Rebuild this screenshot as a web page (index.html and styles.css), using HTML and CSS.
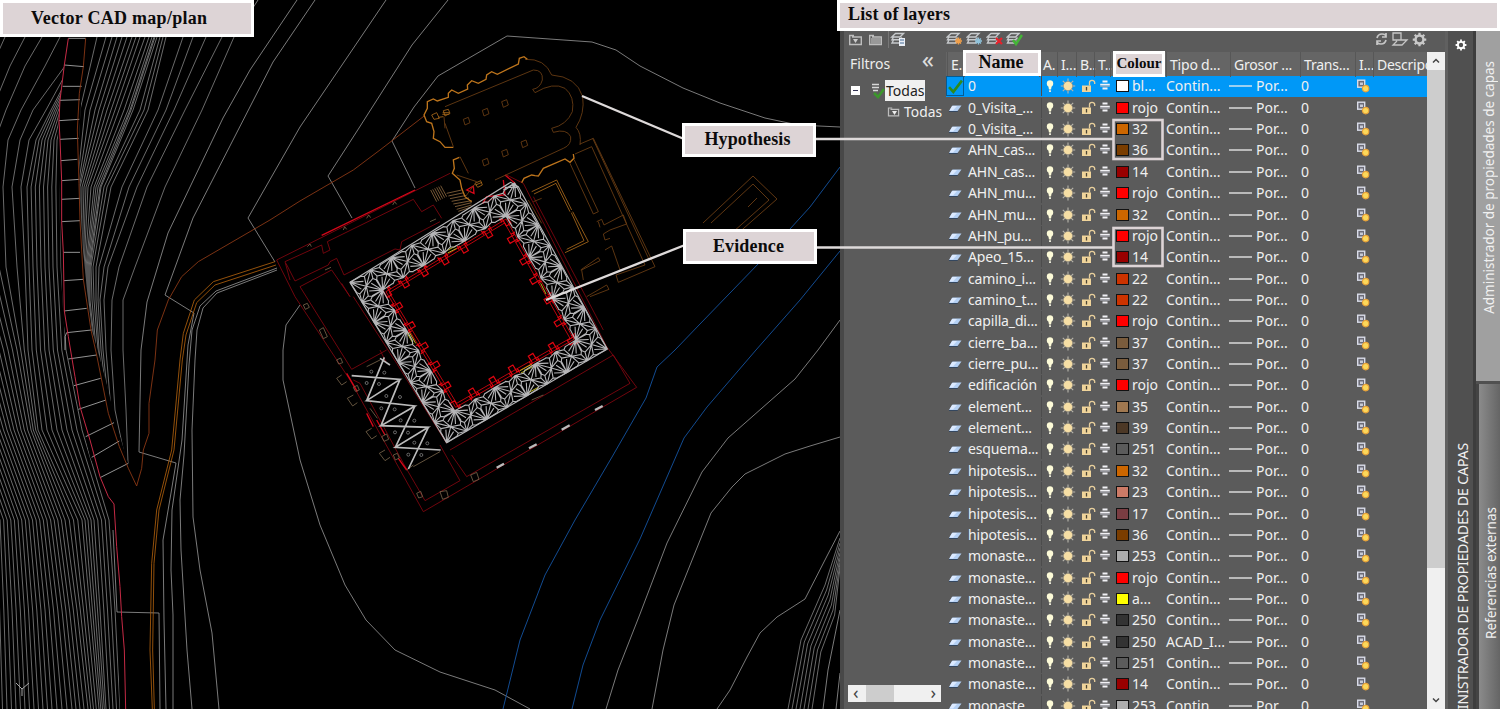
FILE: index.html
```html
<!DOCTYPE html>
<html lang="es">
<head>
<meta charset="utf-8">
<title>Vector CAD map/plan</title>
<link rel="stylesheet" href="styles.css">
</head>
<body>
<svg class="defs" width="0" height="0">
  <symbol id="sheet" viewBox="0 0 14 14"><path d="M4.500 4.500H13.500L9.500 10H1z" fill="#b4d0f4"/><path d="M4 5H9L5 9.500H1.500z" fill="#dceaff"/><path d="M1 10H9.500L10 11H1z" fill="#34475f"/></symbol>
  <symbol id="check" viewBox="0 0 14 14"><path d="M1 8l4 4.500L13 2" fill="none" stroke="#2f8a1c" stroke-width="2.400"/></symbol>
  <symbol id="bulb" viewBox="0 0 10 14"><circle cx="5" cy="4.500" r="3.200" fill="#fdfbd8"/><path d="M3.300 7H6.700L6 10.500H4z" fill="#fdfbd8"/><path d="M4 11.200H6V13H4z" fill="#e8e8d8"/></symbol>
  <symbol id="sun" viewBox="0 0 16 16"><path d="M8 .5V15.500M.8 8H15.200M2.800 2.800L13.200 13.200M13.200 2.800L2.800 13.200" stroke="#b9b6ac" stroke-width="1.100"/><circle cx="8" cy="8" r="4.600" fill="#f7dfa5" stroke="#908a78" stroke-width=".6"/></symbol>
  <symbol id="lock" viewBox="0 0 16 14"><path d="M8.500 6.500V3.500Q8.500 1.300 11 1.300T13.700 3.500V5" fill="none" stroke="#e8cf9c" stroke-width="1.300"/><rect x="1" y="6.500" width="9" height="6.500" fill="#f0d49a"/><path d="M5.500 8V11.500" stroke="#4b4434" stroke-width="1.300"/></symbol>
  <symbol id="plot" viewBox="0 0 12 12"><path d="M3.500 1.500H8.500M1.200 4.700H10.800M3.500 8.500H8.500" stroke="#f2f2f6" stroke-width="1.800"/><path d="M1.200 6.200H10.800" stroke="#aaabb4"/></symbol>
  <symbol id="vp" viewBox="0 0 14 14"><rect x="1.700" y="1.200" width="7" height="7" fill="#6d6d78" stroke="#d9dce8" stroke-width="1.400"/><path d="M4 3.500H7V6H4z" fill="#c7cad6"/><circle cx="9.600" cy="9.600" r="3.200" fill="#fcd85a" stroke="#eaa43a" stroke-width="1.200"/></symbol>
  <symbol id="folder" viewBox="0 0 15 13"><path d="M1 2.500H6M1.700 3V11.500H13.300V4H4" fill="none" stroke="#bdbdbd" stroke-width="1.400"/></symbol>
  <symbol id="stack" viewBox="0 0 15 14"><path d="M5 1.500H13L9.500 5H1.300zM3 5L1.500 7.700H9.500L11.500 5.500M3 8L1.500 11H9.500L12 8" fill="none" stroke="#c6c9cc" stroke-width="1.400"/></symbol>
  <symbol id="gear" viewBox="0 0 16 16"><circle cx="8" cy="8" r="4.200" fill="none" stroke="currentColor" stroke-width="2.600"/><path d="M8 .8V4M8 12V15.200M.8 8H4M12 8H15.200M2.900 2.900L5 5M11 11L13.100 13.100M13.100 2.900L11 5M2.900 13.100L5 11" stroke="currentColor" stroke-width="2.400"/></symbol>
</svg>

<main class="workspace">
  <section class="drawing">
    <svg class="plan" viewBox="0 0 840 709" width="840" height="709">
      <clipPath id="leftOfRoad"><path d="M0 30L68 37 64 66 59 110 58 140 60 220 62 290 63 320 68 350 77 400 90 457 99 478 113 530 117 612 120 709H0z"/></clipPath>
      <clipPath id="rightOfRoad"><path d="M86 37L82 87 79 140 80 200 83 250 87 290 92 330 99 355 107 385 116 423 128 463H300V30H86z"/></clipPath>
      <g id="westContours" clip-path="url(#leftOfRoad)" class="contour"></g>
      <g id="eastContours" clip-path="url(#rightOfRoad)" class="contour"></g>
      <g class="contour bright">
        <path d="M258 0L234 37M297 0L250 70 223 118 168 233 147 302 141 350 139 452 176 463 171 493 163 540 164 620 166 709"/>
        <path d="M315 0L273 62 233 140 193 218 165 295 194 313 188 345 182 440 172 510 171 570 173 615 173 709"/>
        <path d="M386 0L300 127 248 218 275 262M448 0L412 45 359 128 328 176 352 218"/>
        <path d="M415 188L392 141 414 107 438 76 507 36 592 42 616 50 640 66 683 88 720 103 765 118 798 125 840 127"/>
        <path d="M300 305L286 325 283 350 283 380 300 460 320 525 345 585 366 620 395 650 440 672 495 690 530 709"/>
        <path d="M277 268L216 291 200 306 192 330 189 365 184 455 180 500 181 550 187 650 192 709"/>
        <path d="M277 270L217 293 203 308 197 330 195 360 192 430 193 517 200 570 212 633 219 709"/>
        <path d="M117 612L159 613 160 709M113 530L117 612"/>
        <path d="M840 320L818 350 795 379 728 438 702 472 667 543 640 614 618 670 606 709"/>
        <path d="M840 437L810 446 785 454 745 474 732 487 711 513 674 605 663 650 652 709"/>
        <path d="M840 531L827 556 805 599 777 617 760 633 747 657 730 690 717 709"/>
      </g>
      <g id="fanContours" class="contour"></g>
      <path class="contour bright" d="M840 610L828 670 823 709M840 673L836 709"/>
      <g transform="scale(.33333)" class="crossbars">
        <path d="M205 115H257M192 195L252 200M188 259H245M180 301L240 299M177 362L238 358M180 418L236 415M183 482L232 478M185 542L238 538M185 598L240 595M185 665L240 662M190 757H240M192 842L250 838M192 933L260 925M195 1050V1010L200 998 275 990M205 1077L290 1065M222 1157L302 1135M235 1228L318 1200M257 1310L342 1268M275 1372L358 1323M300 1433L385 1390"/>
      </g>
      <g transform="scale(.33333)" class="thin">
        <path class="crimson" d="M205 115L193 195 180 301 177 362 180 418 185 542 185 665 190 757 193 933 205 1010 225 1130 240 1220 270 1320 300 1430 325 1490 342 1512 350 1640 360 1760 365 1850 373 1950 377 2127"/>
        <path class="rust" d="M257 115L250 200 238 280 232 390 237 550 240 662 250 838 273 990 290 1065 325 1240 358 1340 385 1405 410 1458 425 1405 430 1350 447 1300 447 1210 465 1080 472 990 505 900 545 830 595 785 810 660 900 603 1060 510 1140 450 1275 346"/>
        <path class="orange" d="M825 785L640 845 583 900 550 1000 540 1080 515 1350 470 1530 455 1690 450 1950 457 2127M828 795L645 855 590 908 558 1005 547 1080 522 1350 477 1530 462 1690 458 1950 463 2127"/>
      </g>
      <path class="blue" d="M840 167L810 207 760 262 700 324 675 350 657 367 646 398 612 457 575 520 545 575 520 640 503 709M840 251L800 300 756 350 707 407 684 438 640 539 600 620 583 665 572 709"/>

      <!-- monastery walls -->
      <g transform="translate(270 150) scale(.33333)" class="walls">
        <path d="M20 330L540 70M45 335L60 390M20 330L75 440 240 690 460 1085 1100 712 1010 590M45 335L155 285 160 310 180 300 172 275 430 148 455 185 490 165 515 205M48 340L75 393 175 345 180 335 200 325 222 375M90 410L185 360 240 440M90 410L245 658 350 600M222 375L375 297 390 300 395 275 510 215M250 440L380 640 530 880M215 400L240 440M250 690L270 700 330 810 400 940 465 1052 570 992 510 885M545 915L590 980 1080 700 1030 615 540 900M640 160L700 130M710 75L760 100 1010 590M790 140L1000 540M330 600L350 640"/>
        <path class="vivid" d="M155 256L435 120M230 670L262 725M320 810L345 855M385 925L410 960M310 830L290 790M700 90L705 135 650 140 638 160M705 75L735 100M590 120L610 108 612 130z"/>
        <path class="stone" d="M215 675L200 685 215 705 230 695M250 735L232 745 248 768 262 758M305 835L288 845 305 867 320 857M345 900L328 910 345 932 360 922M112 290L120 282 124 290M220 240L224 230 230 238M290 205L296 195 302 203M368 165L374 155 380 163M165 360L183 352M480 215L498 207M100 465L112 460 118 472 106 478zM148 540L160 533 172 560 160 566zM200 630L212 624 218 638 206 642zM250 712L262 706 268 720 256 724zM335 860L350 852 356 868 342 874zM370 915L382 910 388 924 376 930zM440 1030L452 1024 458 1040 446 1044zM510 1025L530 1022 535 1042 518 1048zM602 975L620 967 627 988 610 995zM300 775L322 805M290 650L330 630M410 960L430 945M430 950L510 905M785 750L820 735"/>
        <path class="window" d="M680 953L702 941M777 895L800 883M875 839L899 826M975 780L998 768"/>
        <path class="stairs" d="M482 120L500 155M488 118L506 152M494 115L512 149M500 112L518 146M506 110L524 143M512 107L530 140M530 130L575 120M535 138L582 128M540 146L590 136M545 154L597 144M550 162L605 152M555 170L605 158M560 178L605 165M565 184L600 172"/>
      </g>

      <!-- church and eastern wing -->
      <g transform="translate(410 30) scale(.33333)" class="church">
        <path d="M105 230L370 120Q400 120 397 150 390 175 368 178L375 188Q430 155 465 175 495 200 487 245 470 285 425 295L430 307Q470 295 482 320 485 345 460 355L255 450M345 88Q405 85 425 135 500 140 518 200 525 250 498 292 515 310 510 345M105 280L130 350M150 380L175 430M102 260L105 295"/>
        <path d="M160 268l15-6 5 16-15 7zM217 241l15-6 5 16-15 7zM275 215l15-6 5 16-15 7zM217 391l15-6 5 16-15 7zM275 364l15-6 5 16-15 7zM333 336l15-6 5 16-15 7z"/>
        <path d="M510 342L550 325 735 710 625 757 618 735 705 705 545 350 495 372M480 400L550 552 565 545 492 388M548 325L718 690M560 575L575 568 582 585 640 555 650 582 600 600 580 612 585 630 600 625M585 660L605 648 630 720 680 705M512 720L565 683 570 692 515 720 520 750M530 800L590 765 597 778 540 800M565 575L570 592M355 510L395 580M370 515L395 505"/>
        <path class="gold" d="M365 485L440 450 485 540M488 545L535 635 465 668M372 492L438 460 480 545M484 548L522 632 470 658"/>
        <path class="gold heavy" d="M352 88L342 80 328 85 325 102 262 133 245 125 230 135 228 148 205 160 185 152 172 165 173 177 145 190 125 180 115 190 115 202 82 213 70 207 52 215 52 235 42 255 50 275 65 280 72 305 70 325 90 335 105 352 130 352M148 382L130 390 133 415 127 430 150 450 155 475 165 500 185 515M335 458L342 445 365 435 375 437 385 438 400 415 465 387 480 397 492 385 490 372"/>
        <path class="gold" d="M65 255L80 248 88 265 72 268zM85 262L100 260M100 242L115 238 120 250 105 258zM98 248H118M97 253H118M195 460L212 452 217 465 203 472zM197 465L216 457"/>
        <path d="M140 435L200 455 170 495"/>
      </g>
      <path class="ochre" d="M703 223L753 176 777 199 727 243M711 223L753 184 769 200 724 240M757 198L748 207"/>

      <g transform="translate(270 150) scale(.33333)">
        <g id="buttresses" class="buttress"></g>
        <path class="yellow" d="M530 302L558 288M533 309L560 295M412 550L430 582M418 547L437 580M812 400L828 432M750 662L785 643M753 669L788 650M775 728L805 712"/>
        <path id="vault" class="vault"></path>
        <path class="vault" d="M240 397L722 97 745 110 1012 597 530 878zM700 120L735 98M705 112H742"/>
        <path class="ribs" d="M245 677L390 688 290 752 435 768 333 827 475 832 376 892 512 900M343 622L290 752M390 688L333 827M435 768L376 892M475 832L415 957M330 625L360 645"/>
        <g id="rosettes" class="rosettes"></g>
      </g>
      <path class="ucs" d="M16 683L22 689 29 683M22 689V696"/>
    </svg>
  </section>

  <section class="palette">
    <div class="filters">
      <div class="tools">
        <svg width="15" height="13"><use href="#folder"/><path d="M5 6h5l-2.500 4z" fill="#ccc"/></svg>
        <svg width="15" height="13"><use href="#folder"/><path d="M3 5h10v6H3z" fill="#999"/></svg>
        <i></i>
        <svg width="16" height="14"><use href="#stack"/><path d="M9 6h6v8H9z" fill="#e9eef5"/><path d="M10 8h4M10 11h4" stroke="#456b96"/></svg>
      </div>
      <div class="filters-title"><span>Filtros</span><b>«</b></div>
      <div class="tree">
        <div class="node"><svg class="expander" width="9" height="9"><path d="M0 0h9v9H0z" fill="#fff"/><path d="M2 4.500h5" stroke="#335" /></svg>
          <svg width="16" height="18"><path d="M3 2.500h7M3 5.500h7M4 8.500h5" stroke="#d8d8d8" stroke-width="1.500"/><path d="M5 11l4 4 6-8" fill="none" stroke="#3b972b" stroke-width="2.500"/></svg><span class="picked">Todas</span></div>
        <div class="node child"><svg width="14" height="13"><use href="#folder"/><path d="M5 6h5l-2.500 4z" fill="#eee"/></svg><span>Todas</span></div>
      </div>
      <div class="hscroll"><span>‹</span><i></i><span>›</span></div>
    </div>

    <div class="layers">
      <div class="tools">
        <svg width="17" height="15"><use href="#stack" width="15" height="14"/><path d="M9 9h7M12.500 5.500v7M10 6.500l5 5M15 6.500l-5 5" stroke="#f2a04a" stroke-width="1.500"/></svg>
        <svg width="17" height="15"><use href="#stack" width="15" height="14"/><path d="M9 9h7M12.500 5.500v7M10 6.500l5 5M15 6.500l-5 5" stroke="#8fc3dc" stroke-width="1.300"/></svg>
        <svg width="17" height="15"><use href="#stack" width="15" height="14"/><path d="M10 6l6 6M16 6l-6 6" stroke="#e8202a" stroke-width="2.200"/></svg>
        <svg width="17" height="15"><use href="#stack" width="15" height="14"/><path d="M7 8l3 4 6-9" fill="none" stroke="#43b436" stroke-width="2.500"/></svg>
        <span class="grow"></span>
        <svg width="13" height="14"><path d="M2 6Q3 2 7 2T11 5M11 1v4H7M11 8Q10 12 6 12T2 9M2 13V9h4" fill="none" stroke="#c6c6c6" stroke-width="1.700"/></svg>
        <svg width="18" height="14"><path d="M2 1h8v7H2zM10 8h6l-5 5H2l4-4" fill="none" stroke="#c6c6c6" stroke-width="1.300"/></svg>
        <svg class="gear" width="15" height="15"><use href="#gear"/></svg>
      </div>
      <div class="table">
        <div class="head">
          <span>E..</span><span></span><span>A.</span><span>I...</span><span>B..</span><span>T..</span><span></span><span>Tipo d...</span><span>Grosor ...</span><span>Trans...</span><span>I...</span><span>Descripc</span>
        </div>
        <div id="rows"></div>
      </div>
    </div>
    <div class="vscroll"><svg width="18" height="18"><path d="M6 10.500l3-3 3 3" fill="none" stroke="#444" stroke-width="1.500"/></svg><i></i><svg width="18" height="18"><path d="M6 7.500l3 3 3-3" fill="none" stroke="#444" stroke-width="1.500"/></svg></div>
    <div class="titlebar"><svg class="gear" width="12" height="12"><use href="#gear"/></svg><span>ADMINISTRADOR DE PROPIEDADES DE CAPAS</span></div>
    <div class="tabs"><div class="tab on"><span>Administrador de propiedades de capas</span></div><div class="tab"><span>Referencias externas</span></div></div>
  </section>
</main>

<svg class="leaders" width="1500" height="709">
  <path class="leader" d="M582 96L684 139M546 300L685 245"/>
  <path class="leader" d="M815 139H1113M816 247.500H1113"/>
  <rect x="1113.500" y="120" width="49" height="39"/>
  <rect x="1113.500" y="228" width="49" height="38"/>
</svg>
<div class="label map-label">Vector CAD map/plan</div>
<div class="label list-label">List of layers</div>
<div class="label hypothesis">Hypothesis</div>
<div class="label evidence">Evidence</div>
<div class="label name-label">Name</div>
<div class="label colour-label">Colour</div>
<script src="script.js"></script>
</body>
</html>
```
FILE: styles.css
```css
* { box-sizing: border-box; }
body { margin: 0; width: 1500px; height: 709px; overflow: hidden; position: relative; background: #5b5b5b; font: 14px/21px "Noto Sans", "Open Sans", sans-serif; color: #f0f0f0; }
.defs { position: absolute; }
.workspace { display: flex; height: 709px; }
.drawing { width: 840px; background: #000; }
.plan { display: block; fill: none; }
.contour { stroke: #858585; stroke-width: .8; }
.bright { stroke: #999; }
.crossbars { stroke: #aaa; stroke-width: 2.6; }
.thin { stroke-width: 2.6; }
.crimson { stroke: #c62a45; stroke-width: 3; }
.rust { stroke: #8f3a16; }
.orange { stroke: #a95d0d; }
.blue { stroke: #124b91; stroke-width: 1; }
.walls { stroke: #850610; stroke-width: 2.5; }
.walls .vivid { stroke: #d50719; stroke-width: 4; }
.walls .stone { stroke: #77644a; }
.walls .window { stroke: #bbb; stroke-width: 7; }
.walls .stairs { stroke: #8c683f; }
.church { stroke: #6b3d14; stroke-width: 2.6; }
.church .gold { stroke: #a5661a; }
.church .heavy { stroke: #be751c; stroke-width: 4; }
.ochre { stroke: #6b3d14; stroke-width: .9; }
.buttress { stroke: #e00510; stroke-width: 3.5; }
.yellow { stroke: #b9b51b; stroke-width: 3; }
.vault { stroke: #b5b5b7; stroke-width: 3.3; }
.ribs { stroke: #bbb; stroke-width: 5; }
.rosettes { stroke: #999; stroke-width: 2; }
.ucs { stroke: #aaa; }

.palette { width: 660px; height: 709px; padding-top: 30px; display: flex; background: #5b5b5b; border-left: 4px solid #484848; }
.filters { width: 98px; padding-left: 4px; display: flex; flex-direction: column; }
.tools { height: 22px; display: flex; align-items: center; gap: 5px; padding: 0 0 4px; flex: none; }
.filters .tools i { width: 1px; height: 18px; background: #777; margin-right: -4px; }
.filters-title { height: 23px; display: flex; justify-content: space-between; padding: 1px 8px 0 2px; color: #eee; }
.filters-title b { font: 24px/11px "Noto Sans", sans-serif; color: #ddd; }
.tree { flex: 1; padding: 5px 0 0 3px; overflow: hidden; white-space: nowrap; }
.node { display: flex; align-items: center; height: 21px; }
.expander { margin-right: 9px; }
.picked { background: #f0f0f0; color: #222; margin-left: 0; padding: 0 1px; }
.child { padding-left: 36px; gap: 4px; font-size: 13.8px; }
.hscroll { height: 17px; margin: 0 1px 7px 0; flex: none; background: #f0f0f0; display: flex; justify-content: space-between; color: #444; font-size: 18px; line-height: 14px; padding: 0 5px; }
.hscroll i { width: 28px; background: #cdcdcd; margin-right: 29px; }
.layers { width: 485px; padding-left: 4px; }
.layers .tools { gap: 3px; }
.grow { flex: 1; }
.gear { color: #c9c9c9; }
.table { height: 657px; overflow: hidden; }
.head { height: 24px; background: #656565; display: grid; grid-template-columns: 17px 75px 18px 19px 18px 16px 56px 64px 70px 55px 18px 1fr; white-space: nowrap; line-height: 25px; color: #f0f0f0; margin-left: 0; padding-left: 2px; }
.head span { box-shadow: -1px 0 #575757; padding-left: 3px; letter-spacing: -.2px; min-width: 0; }
.head span:last-child { letter-spacing: -.25px; }
#rows { margin-top: -.3px; }
.row { height: 21.37px; line-height: 20px; display: grid; grid-template-columns: 22px 74px 3px 15px 21px 18px 17px 16px 34px 63px 27px 45px 55px 1fr; align-items: center; white-space: nowrap; }
.row svg { display: block; }
.row.current { background: #0098f7; }
.row .state { padding-left: 2px; }
.row.current .state { border: 1px solid #075b91; height: 20px; padding: 1px; width: 18px; }
.name { border-right: 1px solid #4c4c4c; letter-spacing: -.15px; }
.swatch { width: 13px; height: 12px; border: 1.5px solid #111; }
.vscroll { width: 18px; background: #f0f0f0; margin-top: 22px; display: flex; flex-direction: column; }
.vscroll i { height: 498px; flex: none; background: #cdcdcd; margin-bottom: auto; }
.titlebar { width: 31px; border-left: 3px solid #606060; border-right: 3px solid #3d3d3d; background: #505050; display: flex; flex-direction: column; align-items: center; padding-top: 9px; }
.titlebar .gear { color: #fff; flex: none; }
.titlebar span { writing-mode: vertical-rl; transform: rotate(180deg); font-size: 14px; white-space: nowrap; margin: 392px -3px 0 0; letter-spacing: -.1px; }
.tabs { width: 24px; flex: none; }
.tab { background: linear-gradient(90deg, #8b8b8b, #656565); height: 328px; border-left: 3px solid #444; padding: 126px 0 0 2px; }
.tab.on { background: #a0a0a0; height: 354px; border: 0; border-bottom: 3px solid #505050; padding: 31px 0 0 3px; }
.tab:last-child { padding-top: 123px; }
.tab span { display: block; writing-mode: vertical-rl; transform: rotate(180deg); white-space: nowrap; font-size: 13.5px; }

.leaders { position: absolute; left: 0; top: 0; fill: none; stroke: #ddd4d6; stroke-width: 2.6; }
.leader { stroke: #dedada; stroke-width: 2.4; }
.label { position: absolute; background: #ddd4d6; border: 3px solid #fff; color: #0b0b0b; font: bold 18px/27px "Liberation Serif", serif; text-align: center; white-space: nowrap; }
.map-label { left: 0; top: 0; width: 254px; height: 37px; line-height: 31px; text-align: left; padding-left: 28px; letter-spacing: .28px; }
.list-label { left: 837px; top: 0; width: 663px; height: 31px; line-height: 23px; text-align: left; padding-left: 8px; letter-spacing: .15px; }
.hypothesis { left: 682px; top: 123px; width: 134px; height: 34px; line-height: 26px; padding-right: 3px; letter-spacing: .1px; }
.evidence { left: 683px; top: 229px; width: 134px; height: 35px; line-height: 28px; padding-right: 3px; letter-spacing: .15px; }
.name-label { left: 963px; top: 50px; width: 78px; height: 26px; line-height: 19px; padding-right: 2px; }
.colour-label { left: 1113px; top: 51px; width: 52px; height: 26px; font-size: 15px; line-height: 19px; }
```
FILE: script.js
```js
const el = id => document.getElementById(id);

/* Linear interpolation through [index, value] stops. */
function at(stops, k) {
  let i = 1;
  while (i < stops.length - 1 && stops[i][0] < k) i++;
  const [a, x] = stops[i - 1], [b, y] = stops[i];
  return x + (y - x) * (k - a) / (b - a);
}
function contours(levels, count) {
  let out = '';
  for (let k = 0; k < count; k++) {
    out += '<path d="M' + levels.map(([y, s]) => at(s, k).toFixed(1) + ' ' + y).join('L') + '"/>';
  }
  return out;
}
el('westContours').innerHTML = contours([
  [37, [[0, 100], [8, 93], [9, 90], [10, 78], [11, 60], [12, 42], [13, 25], [14, 5]]],
  [66, [[0, 80], [8, 74], [9, 70], [10, 65], [11, 45], [12, 25], [13, 10], [14, -8]]],
  [110, [[0, 66], [8, 51], [9, 46], [10, 33], [11, 21], [12, 6], [13, -8]]],
  [140, [[0, 60], [8, 36], [9, 29], [10, 20], [11, 8], [12, -5], [13, -17]]],
  [187, [[0, 60], [8, 27], [9, 21], [10, 12], [11, 3], [12, -6]]],
  [267, [[0, 61], [8, 29], [9, 25], [10, 17], [11, 6], [12, -1], [13, -7]]],
  [350, [[0, 66], [8, 32], [9, 28], [12, 17], [16, -1]]],
  [430, [[0, 82], [8, 42], [9, 38], [12, 31], [15, 21], [21, 0]]],
  [520, [[0, 109], [4, 94], [8, 82], [12, 65], [30, 0]]],
  [610, [[0, 115], [4, 100], [8, 90], [12, 77], [16, 62], [20, 45], [28, 12]]],
  [709, [[0, 120], [4, 106], [8, 99], [12, 88], [16, 72], [20, 52], [28, 16]]]
], 33);
const east = [
  [37, [234, 222, 206, 193, 183, 166, 163, 160, 157, 155, 154, 152, 149, 145, 140, 136, 132, 127, 122, 117, 112, 106, 97]],
  [110, [202, 185, 174, 166, 158, 148, 144, 140, 133, 131, 130, 128, 124, 119, 115, 111, 107, 103, 99, 95, 90, 85, 80]],
  [187, [165, 147, 137, 129, 122, 111, 107, 104, 101, 100, 98, 96, 94, 91, 88, 86, 84, 82, 80, 79, 78, 77, 76]],
  [267, [135, 119, 108, 104, 99, 96, 93, 91, 90, 89, 88, 87, 86, 85, 84, 83, 82, 81, 80, 79, 78, 77, 76]],
  [300, [123, 112, 104, 100, 98, 96, 94, 92, 90, 89, 88, 87, 86, 85, 84, 83, 82, 81, 80, 79, 78, 77, 76]],
  [350, [123, 111, 106, 103, 101, 99, 98, 96, 95, 94, 93, 92, 91, 90, 89, 88, 87, 86, 85, 84, 83, 82, 81]],
  [410, [126, 115, 111, 109, 108, 106, 105, 104, 103, 102, 101, 100, 99, 98, 97, 96, 95, 94, 93, 92, 91, 90, 89]],
  [463, [128, 126, 125, 124, 123, 122, 121, 120, 119, 118, 117, 116, 115, 114, 113, 112, 111, 110, 109, 108, 107, 106, 105]]
];
el('eastContours').innerHTML = contours(east.map(([y, xs]) => [y, xs.map((x, i) => [i, x])]), 23);
let fan = '';
for (let i = 0; i < 7; i++) {
  fan += `<path d="M840 ${538 + i * 5}L${825 + i * 1.6} ${585 + i * 5}L${801 + i * 3.3} ${640 + i * 2}L${788 + i * 4} 709"/>`;
}
el('fanContours').innerHTML = fan;

/* Star vaults: border cells of an 8 by 8 grid laid over the cloister. */
const P = (s, t) => [240 + s * 495 + t * 290 - s * t * 13, 397 - s * 297 + t * 481 + s * t * 16];
let d = '';
for (let i = 0; i < 8; i++) for (let j = 0; j < 8; j++) {
  if (i > 0 && i < 7 && j > 0 && j < 7) continue;
  const seg = (a, b, c, e) => {
    const p = P((i + a) / 8, (j + b) / 8), q = P((i + c) / 8, (j + e) / 8);
    d += `M${p.map(v => v.toFixed(1))}L${q.map(v => v.toFixed(1))}`;
  };
  for (const [x, y] of [[0, 0], [1, 0], [0, 1], [1, 1]]) {
    const f = v => x ? 1 - v : v, g = v => y ? 1 - v : v;
    const big = (x + y + i + j) % 2 === 0;
    const tips = big ? [[.5, .02], [.5, .26], [.5, .5], [.26, .5], [.02, .5]] : [[.36, .1], [.5, .5], [.1, .36]];
    for (const [a, b] of tips) seg(x, y, f(a), g(b));
    if (!big) {
      seg(f(.36), g(.1), f(.5), g(.5));
      seg(f(.1), g(.36), f(.5), g(.5));
      seg(f(.36), g(.1), f(.5), g(0));
      seg(f(.1), g(.36), f(0), g(.5));
    }
  }
}
el('vault').setAttribute('d', d);

const sides = [
  [-31, 1, [[403, 396], [460, 362], [522, 327], [580, 292], [653, 247], [350, 425], [708, 210]]],
  [59, 1, [[730, 265], [767, 330], [797, 388], [840, 447], [870, 515], [910, 570]]],
  [-31, -1, [[850, 595], [790, 628], [730, 663], [672, 697], [610, 732], [555, 770]]],
  [59, -1, [[380, 472], [418, 530], [457, 592], [492, 648], [525, 710]]]
];
el('buttresses').innerHTML = '<path d="M348 425L708 207 912 568 557 772zM358 428L704 219 900 565 560 760z" stroke-width="2.500"/>' +
  sides.map(([a, v, pts]) => pts.map(([x, y]) => `<path transform="translate(${x} ${y}) rotate(${a}) scale(1 ${v})" d="M-14 -8H-8V16H8V-8H14M-14 -14V0M14 -14V0"/>`).join('')).join('');

el('rosettes').innerHTML = [[304, 665], [343, 668], [290, 699], [327, 702], [349, 738], [390, 741], [334, 775], [374, 778], [392, 811], [433, 812], [375, 847], [414, 848], [433, 878], [472, 880], [415, 914], [454, 915]]
  .map(([x, y]) => `<circle cx="${x}" cy="${y}" r="4.500"/>`).join('');

const palette = { 'bl...': '#fff', rojo: '#f00', 32: '#cc6600', 36: '#7a3d00', 14: '#990000', 22: '#cc3300', 37: '#7a5c3d', 35: '#a07850', 39: '#4c3826', 251: '#5b5b5b', 23: '#cc7a66', 17: '#7a3d42', 253: '#adadad', 'a...': '#ff0', 250: '#333' };
const names = ['0', '0_Visita_...', '0_Visita_...', 'AHN_cas...', 'AHN_cas...', 'AHN_mu...', 'AHN_mu...', 'AHN_pu...', 'Apeo_15...', 'camino_i...', 'camino_t...', 'capilla_di...', 'cierre_ba...', 'cierre_pu...', 'edificación', 'element...', 'element...', 'esquema...',
  ...Array(4).fill('hipotesis...'), ...Array(8).fill('monaste...')];
const colours = ['bl...', 'rojo', '32', '36', '14', 'rojo', '32', 'rojo', '14', '22', '22', 'rojo', '37', '37', 'rojo', '35', '39', '251', '32', '23', '17', '36', '253', 'rojo', 'a...', '250', '250', '251', '14', '253'];
const icon = (id, w, h) => `<svg width="${w}" height="${h}"><use href="#${id}"/></svg>`;
el('rows').innerHTML = names.map((n, i) => `<div class="row${i ? '' : ' current'}">
  <span class="state">${i ? icon('sheet', 14, 14) : icon('check', 15, 16)}</span><span class="name">${n}</span><span></span>
  ${icon('bulb', 10, 14)}${icon('sun', 16, 16)}${icon('lock', 16, 14)}${icon('plot', 12, 12)}
  <span class="swatch" style="background:${palette[colours[i]]}"></span><span>${colours[i]}</span>
  <span>${i === 26 ? 'ACAD_I...' : 'Contin...'}</span><svg width="24" height="4"><path d="M0 2H23" stroke="#eee" stroke-width="1.300"/></svg>
  <span>Por...</span><span>0</span>${icon('vp', 14, 14)}</div>`).join('');
```
